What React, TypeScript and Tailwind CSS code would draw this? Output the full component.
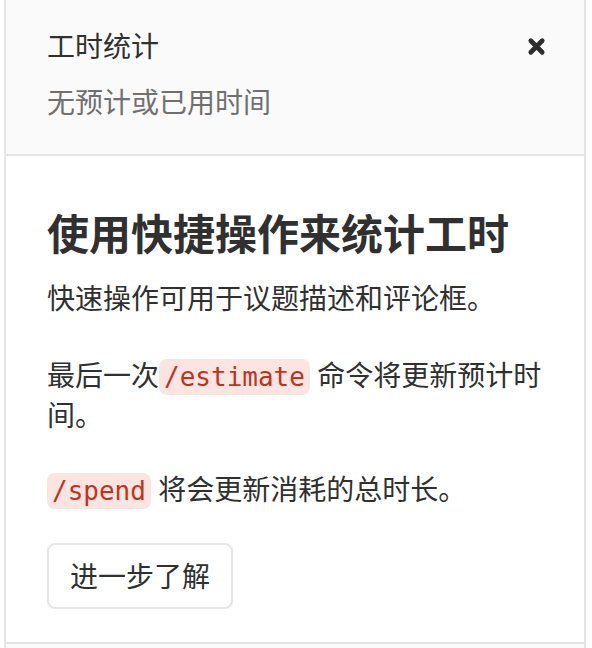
export default function App() {
  const font = { fontFamily: '"Noto Sans", "Noto Sans CJK SC", sans-serif' };

  return (
    <div className="w-full h-[648px] bg-white" style={font}>
      <div className="ml-[4px] w-[582px] h-full border-x-2 border-[#e5e5e5] flex flex-col">
        <div className="bg-[#fafafa] border-b-2 border-[#e5e5e5] pl-[41px] pr-[38px] pt-[26px] pb-[32px]">
          <div className="flex items-center justify-between">
            <span className="text-[28px] leading-[40px] text-[#303030]">工时统计</span>
            <svg width="19" height="19" viewBox="0 0 20 20" className="text-[#2e2e2e]">
              <path
                d="M4 4 L16 16 M16 4 L4 16"
                stroke="currentColor"
                strokeWidth="5"
                strokeLinecap="round"
              />
            </svg>
          </div>
          <p className="mt-[16px] text-[28px] leading-[40px] text-[#707070]">无预计或已用时间</p>
        </div>

        <div className="flex-1 border-b-2 border-[#e5e5e5] pl-[41px] pr-[30px] pt-[52px] text-[#303030]">
          <h4 className="text-[42px] leading-[52px] font-bold">使用快捷操作来统计工时</h4>
          <p className="mt-[18px] text-[28px] leading-[40px]">快速操作可用于议题描述和评论框。</p>
          <p className="mt-[37px] text-[28px] leading-[40px]">
            最后一次
            <code className="rounded-[8px] bg-[#fbe5e1] px-[5px] py-[3px] text-[26px] leading-[32px] text-[#c0341d] font-['DejaVu_Sans_Mono',monospace]">
              /estimate
            </code>{" "}
            命令将更新预计时间。
          </p>
          <p className="mt-[34px] text-[28px] leading-[40px]">
            <code className="rounded-[8px] bg-[#fbe5e1] px-[5px] py-[3px] text-[26px] leading-[32px] text-[#c0341d] font-['DejaVu_Sans_Mono',monospace]">
              /spend
            </code>{" "}
            将会更新消耗的总时长。
          </p>
          <button
            type="button"
            className="mt-[34px] h-[66px] px-[21px] rounded-[8px] border-2 border-[#e5e5e5] bg-white text-[28px] text-[#303030]"
          >
            进一步了解
          </button>
        </div>
        <div className="h-[4px] bg-[#fafafa]" />
      </div>
    </div>
  );
}
